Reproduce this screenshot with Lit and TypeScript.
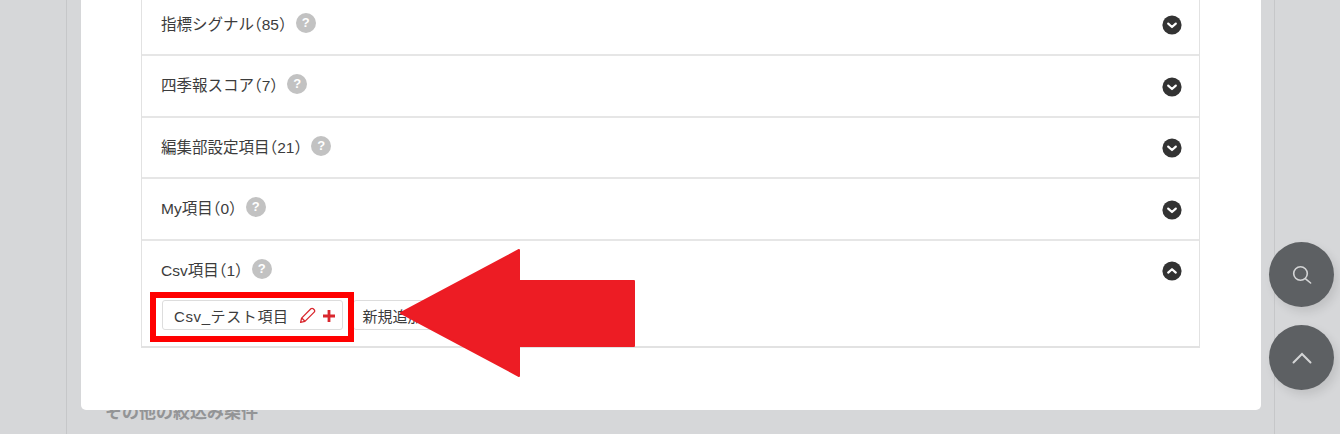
import { LitElement, html, css, svg } from 'lit'
import { customElement } from 'lit/decorators.js'

/** Accordion sections of the item picker. */
const SECTIONS = [
  { label: '指標シグナル（85）', open: false },
  { label: '四季報スコア（7）', open: false },
  { label: '編集部設定項目（21）', open: false },
  { label: 'My項目（0）', open: false },
  { label: 'Csv項目（1）', open: true },
]

const chevron = (open: boolean) => html`
  <svg class="toggle" viewBox="0 0 20 20" aria-hidden="true">
    <circle cx="10" cy="10" r="9.6" fill="#333"></circle>
    ${svg`<path d=${open ? 'M6.2 11.6 10 8.2l3.8 3.4' : 'M6.2 8.6 10 12l3.8-3.4'} fill="none" stroke="#fff" stroke-width="2.2" stroke-linecap="round" stroke-linejoin="round"></path>`}
  </svg>
`

@customElement('app-root')
export class AppRoot extends LitElement {
  static styles = css`
    :host {
      display: block;
      height: 434px;
      overflow: hidden;
      position: relative;
      background: #d6d7d9;
      font-family: 'Liberation Sans', 'Noto Sans CJK JP', sans-serif;
      font-size: 15.5px;
      color: #3c3c3c;
    }
    .page {
      height: 434px;
      box-sizing: border-box;
      margin: 0 65px 0 66px;
      padding: 0 13px 0 14px;
      border-left: 1px solid #c6c7c9;
      border-right: 1px solid #c6c7c9;
      display: flex;
      flex-direction: column;
    }
    .modal {
      position: relative;
      z-index: 1;
      height: 410px;
      flex: none;
      box-sizing: border-box;
      padding: 0 61px 62px 60px;
      background: #fff;
      border-radius: 0 0 5px 5px;
      display: flex;
      flex-direction: column;
      justify-content: flex-end;
      overflow: hidden;
    }
    .list {
      flex: none;
      border: solid #e2e2e2;
      border-width: 0 1px 2px;
    }
    .section {
      border-top: 2px solid #e6e6e6;
    }
    .head {
      height: 59.5px;
      box-sizing: border-box;
      padding: 0 17px 0 19px;
      display: flex;
      align-items: center;
      gap: 9px;
    }
    .title {
      font-feature-settings: 'halt';
      line-height: 20px;
      margin-top: 1px;
    }
    .help {
      width: 20px;
      height: 20px;
      margin-top: -3px;
      border-radius: 50%;
      background: #c2c2c2;
      color: #fff;
      font-size: 13px;
      font-weight: 700;
      line-height: 20px;
      text-align: center;
    }
    .toggle {
      width: 20px;
      height: 20px;
      margin-left: auto;
      margin-top: 2px;
    }
    .chips {
      display: flex;
      gap: 10px;
      padding: 0 20px 16px;
    }
    .chip {
      height: 30px;
      box-sizing: border-box;
      padding: 1px 6px 0 11px;
      border: 1px solid #ddd;
      border-radius: 3px;
      display: flex;
      align-items: center;
      font-size: 15px;
      letter-spacing: 0.6px;
      white-space: nowrap;
    }
    .chip svg {
      flex: none;
    }
    .pencil {
      margin-left: 10px;
    }
    .plus {
      margin-left: 6px;
    }
    .chip.add {
      padding: 1px 9px 0;
      letter-spacing: 0;
    }
    .below {
      margin: -8px 0 0 24px;
      font-size: 17px;
      font-weight: 700;
      line-height: 22px;
      color: #939496;
    }
    .fabs {
      position: absolute;
      left: 1269px;
      top: 242px;
      z-index: 2;
      display: flex;
      flex-direction: column;
      gap: 18px;
    }
    .fab {
      width: 65px;
      height: 65px;
      border-radius: 50%;
      background: #5d6063;
      box-shadow: 4px 5px 10px rgba(0, 0, 0, 0.1);
      display: flex;
      align-items: center;
      justify-content: center;
    }
    .note {
      position: absolute;
      left: 0;
      top: 0;
      z-index: 3;
      pointer-events: none;
    }
  `

  render() {
    return html`
      <div class="page">
        <div class="modal">
          <div class="list">
            ${SECTIONS.map(
              (s) => html`
                <div class="section">
                  <div class="head">
                    <span class="title">${s.label}</span>
                    <span class="help">?</span>
                    ${chevron(s.open)}
                  </div>
                  ${s.open
                    ? html`<div class="chips">
                        <div class="chip">
                          Csv_テスト項目
                          <svg class="pencil" width="17" height="17" viewBox="0 0 17 17" fill="none" stroke="#d9272e" stroke-width="1.3" stroke-linejoin="round">
                            <path d="M1.6 15.4l1-4.3L11.9 1.8a1.6 1.6 0 0 1 2.3 0l1 1a1.6 1.6 0 0 1 0 2.3L5.9 14.4z"></path>
                            <path d="M2.7 11l3.3 3.3"></path>
                          </svg>
                          <svg class="plus" width="14" height="14" viewBox="0 0 14 14">
                            <path d="M7 1v12M1 7h12" stroke="#d9272e" stroke-width="2.8"></path>
                          </svg>
                        </div>
                        <div class="chip add">新規追加</div>
                      </div>`
                    : ''}
                </div>
              `,
            )}
          </div>
        </div>
        <div class="below">その他の絞込み条件</div>
      </div>

      <div class="fabs">
        <div class="fab">
          <svg width="22" height="22" viewBox="0 0 22 22" fill="none" stroke="#d4d5d6" stroke-width="1.6" stroke-linecap="round">
            <circle cx="9.5" cy="9.5" r="6.8"></circle>
            <path d="M14.6 14.8l5 4.2"></path>
          </svg>
        </div>
        <div class="fab">
          <svg width="20" height="12" viewBox="0 0 20 12" fill="none" stroke="#d4d5d6" stroke-width="2" stroke-linecap="round">
            <path d="M1.5 10.5 10 2l8.5 8.5"></path>
          </svg>
        </div>
      </div>

      <svg class="note" width="1340" height="434" viewBox="0 0 1340 434">
        <rect x="153" y="295" width="198" height="44" fill="none" stroke="#f00" stroke-width="6"></rect>
        <path d="M401 313 519 250v31h115v65H519v30z" fill="#ed1c24" stroke="#ed1c24" stroke-width="2" stroke-linejoin="round"></path>
      </svg>
    `
  }
}
